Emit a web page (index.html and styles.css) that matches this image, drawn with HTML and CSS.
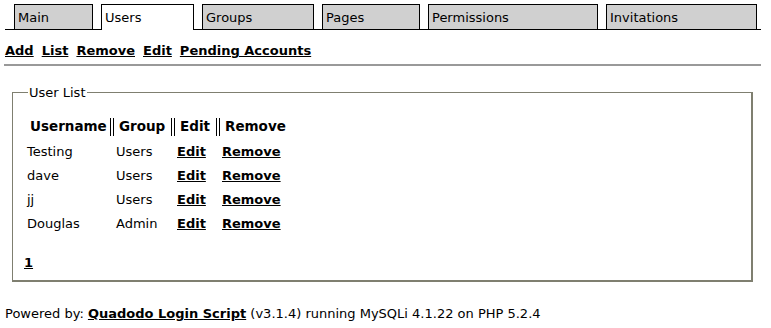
FILE: index.html
```html
<!DOCTYPE html>
<html lang="en">
<head>
    <meta charset="UTF-8">
    <title>User List</title>
    <link rel="stylesheet" href="styles.css">
</head>
<body>
    <div class="page">
        <div class="tabs">
            <div class="tab tab-main">Main</div>
            <div class="tab tab-users active">Users</div>
            <div class="tab tab-groups">Groups</div>
            <div class="tab tab-pages">Pages</div>
            <div class="tab tab-perms">Permissions</div>
            <div class="tab tab-invites">Invitations</div>
        </div>

        <div class="subnav">
            <a href="#">Add</a>
            <a href="#">List</a>
            <a href="#">Remove</a>
            <a href="#">Edit</a>
            <a href="#">Pending Accounts</a>
        </div>

        <hr class="rule">

        <fieldset class="box">
            <legend>User List</legend>
            <table class="users">
                <tr>
                    <th class="col-name">Username</th>
                    <th class="col-group">Group</th>
                    <th class="col-edit">Edit</th>
                    <th class="col-remove">Remove</th>
                </tr>
                <tr>
                    <td>Testing</td>
                    <td>Users</td>
                    <td><a href="#">Edit</a></td>
                    <td><a href="#">Remove</a></td>
                </tr>
                <tr>
                    <td>dave</td>
                    <td>Users</td>
                    <td><a href="#">Edit</a></td>
                    <td><a href="#">Remove</a></td>
                </tr>
                <tr>
                    <td>jj</td>
                    <td>Users</td>
                    <td><a href="#">Edit</a></td>
                    <td><a href="#">Remove</a></td>
                </tr>
                <tr>
                    <td>Douglas</td>
                    <td>Admin</td>
                    <td><a href="#">Edit</a></td>
                    <td><a href="#">Remove</a></td>
                </tr>
            </table>
            <div class="pager"><a href="#">1</a></div>
        </fieldset>

        <div class="footer">
            Powered by: <a href="#">Quadodo Login Script</a> (v3.1.4) running MySQLi 4.1.22 on PHP 5.2.4
        </div>
    </div>
</body>
</html>
```

FILE: styles.css
```css
body {
    margin: 0;
    background-color: #fff;
    color: #000;
    font-family: 'DejaVu Sans', Verdana, sans-serif;
    font-size: 13px;
}

a {
    color: #000;
    font-weight: bold;
}

.page {
    padding: 4px 10px 0 5px;
}

/* tab strip */
.tabs {
    display: flex;
    gap: 8px;
    padding-left: 9px;
    border-bottom: 1px solid #000;
    height: 25px;
}

.tab {
    box-sizing: border-box;
    height: 25px;
    padding: 1px 0 0 3px;
    line-height: 23px;
    background-color: #d0d0d0;
    border: 1px solid #000;
    border-bottom: none;
}

.tab.active {
    background-color: #fff;
    height: 26px;
}

.tab-main { width: 79px; }
.tab-users { width: 93px; }
.tab-groups { width: 112px; }
.tab-pages { width: 98px; }
.tab-perms { width: 170px; }
.tab-invites { width: 151px; }

/* sub navigation */
.subnav {
    display: flex;
    gap: 8px;
    margin-top: 12px;
    line-height: 18px;
}

.rule {
    margin: 4px 0 0 -1px;
    border: none;
    border-top: 2px solid #999;
}

/* user list box */
.box {
    margin: 19px 8px 0 7px;
    padding: 12px 9px 10px 9px;
    border: 1px solid #7f7f70;
    border-right-width: 2px;
    border-bottom-width: 2px;
}

.box legend {
    margin-left: 6px;
    padding: 0 1px;
    line-height: 15px;
}

.users {
    border-collapse: separate;
    border-spacing: 2px 6px;
}

.users th,
.users td {
    height: 18px;
    padding: 0 3px;
    text-align: left;
    white-space: nowrap;
}

.users th {
    box-sizing: border-box;
    padding: 0 3px 2px 5px;
    font-size: 13.5px;
    border-left: 1px solid #000;
    border-right: 1px solid #000;
}

.users th.col-name { border-left: none; width: 87px; padding-left: 6px; }
.users th.col-group { width: 59px; }
.users th.col-edit { width: 43px; }
.users th.col-remove { border-right: none; }

.pager {
    margin: 17px 0 0 2px;
    line-height: 15px;
}

.footer {
    margin-top: 24px;
    line-height: 15px;
}
```
